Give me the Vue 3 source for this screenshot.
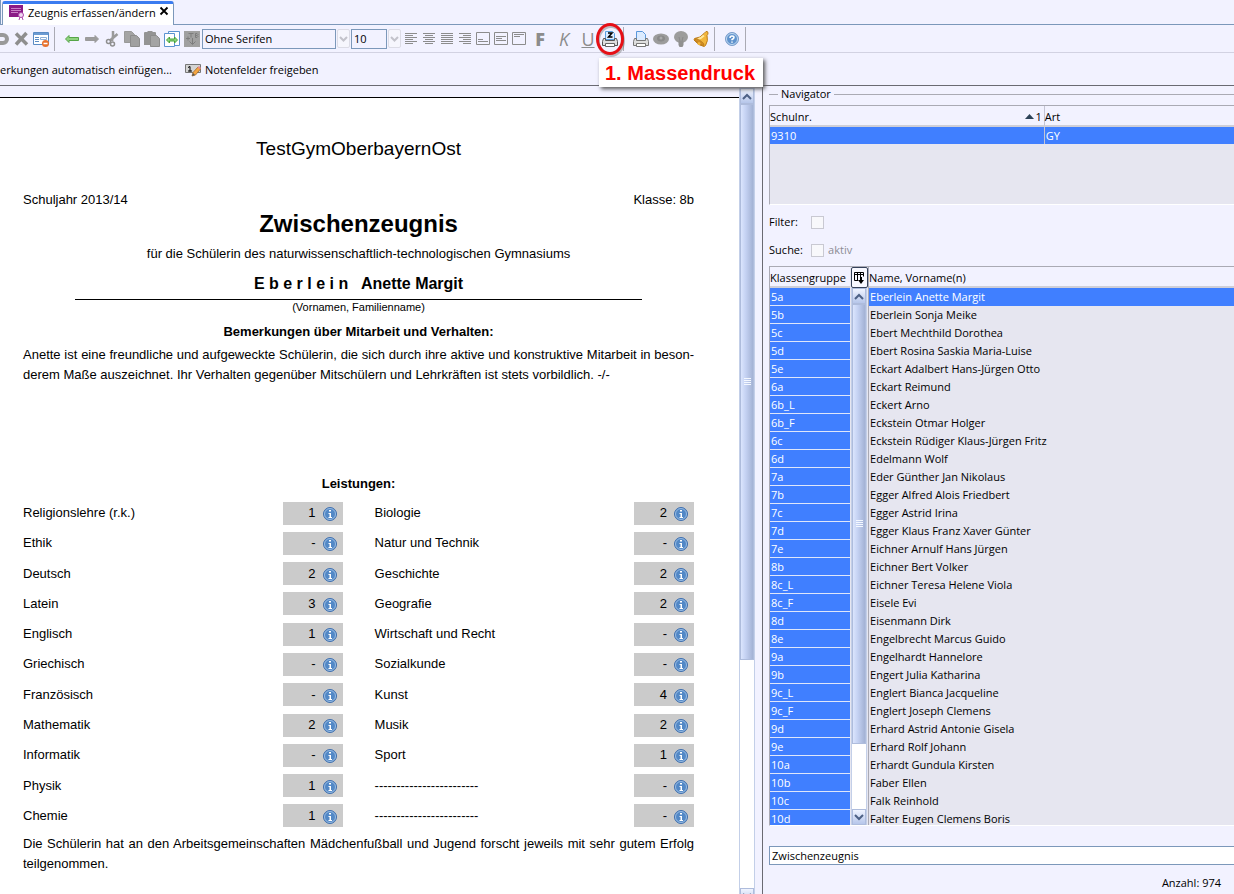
<script setup>
import { ref } from 'vue'

const school = 'TestGymOberbayernOst'
const font = ref('Ohne Serifen')
const size = ref('10')
const report = ref('Zwischenzeugnis')

const leftSubjects = ref([
  { name: 'Religionslehre (r.k.)', grade: '1' },
  { name: 'Ethik', grade: '-' },
  { name: 'Deutsch', grade: '2' },
  { name: 'Latein', grade: '3' },
  { name: 'Englisch', grade: '1' },
  { name: 'Griechisch', grade: '-' },
  { name: 'Französisch', grade: '-' },
  { name: 'Mathematik', grade: '2' },
  { name: 'Informatik', grade: '-' },
  { name: 'Physik', grade: '1' },
  { name: 'Chemie', grade: '1' },
])
const rightSubjects = ref([
  { name: 'Biologie', grade: '2' },
  { name: 'Natur und Technik', grade: '-' },
  { name: 'Geschichte', grade: '2' },
  { name: 'Geografie', grade: '2' },
  { name: 'Wirtschaft und Recht', grade: '-' },
  { name: 'Sozialkunde', grade: '-' },
  { name: 'Kunst', grade: '4' },
  { name: 'Musik', grade: '2' },
  { name: 'Sport', grade: '1' },
  { name: '------------------------', grade: '-' },
  { name: '------------------------', grade: '-' },
])

const groups = [
  '5a', '5b', '5c', '5d', '5e', '6a', '6b_L', '6b_F', '6c', '6d', '7a', '7b', '7c', '7d', '7e',
  '8b', '8c_L', '8c_F', '8d', '8e', '9a', '9b', '9c_L', '9c_F', '9d', '9e', '10a', '10b', '10c', '10d',
]
const pupils = [
  'Eberlein Anette Margit', 'Eberlein Sonja Meike', 'Ebert Mechthild Dorothea',
  'Ebert Rosina Saskia Maria-Luise', 'Eckart Adalbert Hans-Jürgen Otto', 'Eckart Reimund',
  'Eckert Arno', 'Eckstein Otmar Holger', 'Eckstein Rüdiger Klaus-Jürgen Fritz', 'Edelmann Wolf',
  'Eder Günther Jan Nikolaus', 'Egger Alfred Alois Friedbert', 'Egger Astrid Irina',
  'Egger Klaus Franz Xaver Günter', 'Eichner Arnulf Hans Jürgen', 'Eichner Bert Volker',
  'Eichner Teresa Helene Viola', 'Eisele Evi', 'Eisenmann Dirk', 'Engelbrecht Marcus Guido',
  'Engelhardt Hannelore', 'Engert Julia Katharina', 'Englert Bianca Jacqueline',
  'Englert Joseph Clemens', 'Erhard Astrid Antonie Gisela', 'Erhard Rolf Johann',
  'Erhardt Gundula Kirsten', 'Faber Ellen', 'Falk Reinhold', 'Falter Eugen Clemens Boris',
]
const selected = ref(0)

const aligns = [
  { label: 'Linksbündig', d: 'M3 3.5h12M3 5.5h8M3 7.5h12M3 9.5h8M3 11.5h12M3 13.5h8' },
  { label: 'Zentriert', d: 'M3 3.5h12M5 5.5h8M3 7.5h12M5 9.5h8M3 11.5h12M5 13.5h8' },
  { label: 'Blocksatz', d: 'M3 3.5h12M3 5.5h12M3 7.5h12M3 9.5h12M3 11.5h12M3 13.5h12' },
  { label: 'Rechtsbündig', d: 'M3 3.5h12M7 5.5h8M3 7.5h12M7 9.5h8M3 11.5h12M7 13.5h8' },
  { label: 'Unten', d: 'M2.5 2.5h13v12h-13zM4 9.5h5M4 11.5h10' },
  { label: 'Mitte', d: 'M2.5 2.5h13v12h-13zM4 6.5h10M4 8.5h6M4 10.5h10' },
  { label: 'Oben', d: 'M2.5 2.5h13v12h-13zM4 4.5h10M4 6.5h6' },
]
</script>

<template>
  <div class="app">
    <header class="tabs">
      <div class="tab-rest"></div>
      <div class="tab">
        <svg width="18" height="16" viewBox="0 0 18 16">
          <path d="M1 0h14v12H1z" fill="#8b1a86" />
          <path d="M3 3.500h10M3 5.500h10M3 7.500h7" stroke="#c97fc6" />
          <circle cx="13" cy="10" r="2.500" fill="#f0d8ef" stroke="#b04aac" />
          <path d="M12 12l-1 3M14 12l1 3" stroke="#b04aac" />
        </svg>
        <span>Zeugnis erfassen/ändern</span>
        <button class="close" aria-label="Schließen">
          <svg width="10" height="10" viewBox="0 0 10 10"><path d="M1.500 1.500l7 7M8.500 1.500l-7 7" stroke="#000" stroke-width="1.800" /></svg>
        </button>
      </div>
    </header>

    <div class="toolbar">
      <button class="tool" aria-label="Rückgängig">
        <svg width="20" height="18" viewBox="0 0 20 18"><path d="M6 5h6a4 4 0 0 1 0 8H6" fill="none" stroke="#999" stroke-width="4" /></svg>
      </button>
      <button class="tool" aria-label="Löschen">
        <svg width="20" height="18" viewBox="0 0 20 18"><path d="M5 3.500l11 11M15.500 3L5 14.500" stroke="#8e8e8e" stroke-width="3.500" /></svg>
      </button>
      <button class="tool" aria-label="Formular leeren">
        <svg width="20" height="18" viewBox="0 0 20 18">
          <path d="M2.500 2.500h15v12h-15z" fill="#fff" stroke="#5b8bc4" />
          <path d="M3 3h14v2H3z" fill="#6b9ad2" />
          <path d="M4 7.500h4M4 9.500h4M4 11.500h4" stroke="#5b8bc4" /><path d="M9.500 7.500h6v2h-6z" fill="none" stroke="#8fb0d8" />
          <circle cx="14.500" cy="13.500" r="3.500" fill="#e8702c" /><path d="M12.500 13.500h4" stroke="#fff" stroke-width="1.500" />
        </svg>
      </button>
      <span class="sep"></span>
      <button class="tool" aria-label="Zurück">
        <svg width="20" height="18" viewBox="0 0 20 18"><path d="M3.500 9l3.500-3.500v2h9.500v3H7v2z" fill="#8fd27f" stroke="#56a548" /></svg>
      </button>
      <button class="tool" aria-label="Vor">
        <svg width="20" height="18" viewBox="0 0 20 18"><path d="M16.500 9L13 5.500v2H3.500v3H13v2z" fill="#9c9c9c" stroke="#9a9a9a" /></svg>
      </button>
      <button class="tool" aria-label="Ausschneiden">
        <svg width="20" height="18" viewBox="0 0 20 18">
          <path d="M11 1v5l-1 5M15.500 4L8 10.500" fill="none" stroke="#9a9a9a" stroke-width="2.500" />
          <circle cx="6.500" cy="11.500" r="2" fill="none" stroke="#8f8f8f" stroke-width="1.500" /><circle cx="10.500" cy="14" r="2" fill="none" stroke="#8f8f8f" stroke-width="1.500" />
        </svg>
      </button>
      <button class="tool" aria-label="Kopieren">
        <svg width="20" height="18" viewBox="0 0 20 18"><path d="M2.500 1.500h7l3 3v8h-10z" fill="#a4a4a4" stroke="#999" /><path d="M8.500 5.500h6l3 3v8h-9z" fill="#a0a0a0" stroke="#8c8c8c" /></svg>
      </button>
      <button class="tool" aria-label="Einfügen">
        <svg width="20" height="18" viewBox="0 0 20 18"><path d="M2 3q0-1 1-1h2l1-1h4l1 1h2q1 0 1 1v12H2z" fill="#949494" /><path d="M8.500 5.500h6l3 3v8h-9z" fill="#a4a4a4" stroke="#8c8c8c" /></svg>
      </button>
      <button class="tool" aria-label="Textbaustein übernehmen">
        <svg width="20" height="18" viewBox="0 0 20 18">
          <path d="M6.500 1.500h11v14h-11z" fill="#fff" stroke="#5b93d0" /><path d="M2.500 3.500h10v13h-10z" fill="#fff" stroke="#5b93d0" />
          <path d="M4.500 10l3-3v2h5V7l3 3-3 3v-2h-5v2z" fill="#8fd27f" stroke="#46a53a" />
        </svg>
      </button>
      <button class="tool" aria-label="Textbaustein TB">
        <svg width="20" height="18" viewBox="0 0 20 18">
          <path d="M2 1h16v16H2z" fill="#a0a0a0" />
          <path d="M6.500 3.500h5M9 3.500v4M13.500 7.500v-4h1.500l1 1-1 1h-1.500M15 5.500l1 1-1 1h-1.500M4 8.500h4M6 6.500v4M10.500 8v6M7.500 11.500l3 3 3-3" fill="none" stroke="#7c7c7c" />
        </svg>
      </button>
      <select v-model="font" class="combo font" aria-label="Schriftart"><option>Ohne Serifen</option></select>
      <span class="drop"><svg width="9" height="6" viewBox="0 0 9 6"><path d="M1 1l3.500 3.500L8 1" fill="none" stroke="#c3c3cb" stroke-width="2" /></svg></span>
      <select v-model="size" class="combo size" aria-label="Schriftgröße"><option>10</option></select>
      <span class="drop"><svg width="9" height="6" viewBox="0 0 9 6"><path d="M1 1l3.500 3.500L8 1" fill="none" stroke="#c3c3cb" stroke-width="2" /></svg></span>
      <button v-for="a in aligns" :key="a.label" class="tool align" :aria-label="a.label">
        <svg width="18" height="18" viewBox="0 0 18 18"><path :d="a.d" fill="none" stroke="#8c8c8c" /></svg>
      </button>
      <button class="tool letter bold">F</button>
      <button class="tool letter italic">K</button>
      <button class="tool letter under">U</button>
      <button class="tool mass" aria-label="Massendruck">
        <svg width="20" height="20" viewBox="0 0 20 20">
          <path d="M5.500 2.500h7l2 2v6h-9z" fill="#dcecff" stroke="#5aa0e0" />
          <path d="M8 4h4L8.500 8h4" fill="none" stroke="#000" stroke-width="1.500" />
          <path d="M3.500 9.500h2v2h9v-2h2l1 3v4h-15v-4z" fill="#dedede" stroke="#555" />
          <path d="M5.500 14.500h9v3h-9z" fill="#fff" stroke="#666" />
        </svg>
        <svg class="ring" width="34" height="38" viewBox="0 0 34 38"><ellipse cx="18" cy="20" rx="12.500" ry="14.500" fill="none" stroke="#777" stroke-opacity=".45" stroke-width="3" /><ellipse cx="17" cy="18" rx="12.500" ry="14.500" fill="none" stroke="#e60f16" stroke-width="3" /></svg>
      </button>
      <span class="sep"></span>
      <button class="tool" aria-label="Drucken">
        <svg width="20" height="18" viewBox="0 0 20 18">
          <path d="M5.500 1.500h6l3 3v6h-9z" fill="#dcebff" stroke="#5a98dc" />
          <path d="M3.500 8.500h2v2h9v-2h2l1 3v4h-15v-4z" fill="#dedede" stroke="#777" />
          <path d="M5.500 13.500h9v3h-9z" fill="#fff" stroke="#777" />
        </svg>
      </button>
      <button class="tool" aria-label="Vorschau">
        <svg width="20" height="18" viewBox="0 0 20 18"><ellipse cx="10" cy="9" rx="8" ry="5.500" fill="#9c9c9c" /><ellipse cx="10" cy="8.500" rx="4" ry="3" fill="#8a8a8a" /><circle cx="10" cy="8" r="1.500" fill="#aaa" /></svg>
      </button>
      <button class="tool" aria-label="Hinweis">
        <svg width="20" height="18" viewBox="0 0 20 18"><ellipse cx="10" cy="7" rx="7" ry="6" fill="#9c9c9c" /><path d="M7.500 11h5v4l-1 2h-3l-1-2z" fill="#909090" /><path d="M8 7l1 4M12 7l-1 4" stroke="#8a8a8a" /></svg>
      </button>
      <button class="tool" aria-label="Erinnerung">
        <svg width="20" height="18" viewBox="0 0 20 18">
          <path d="M15 1.500q2-.500 2 1.500 0 1.500-1 2.500 1.500 5-1.500 10l-1.500 1q-6-1-10-6.500l.500-1.500q6-.500 9.500-5z" fill="#f2b63c" stroke="#bd7d1c" />
          <path d="M13 5.500q-3 3-7 4" fill="none" stroke="#ffe79a" stroke-width="1.800" />
          <ellipse cx="8.500" cy="12" rx="5.500" ry="1.600" transform="rotate(35 8.500 12)" fill="#d08d22" stroke="#b4741a" stroke-width=".600" /><circle cx="8" cy="13.500" r="1.500" fill="#f2b63c" />
        </svg>
      </button>
      <span class="sep"></span>
      <button class="tool" aria-label="Hilfe">
        <svg width="20" height="18" viewBox="0 0 20 18"><circle cx="10" cy="9" r="6.500" fill="#5f93cd" stroke="#7d9fcc" /><circle cx="10" cy="9" r="5.500" fill="none" stroke="#c4dbf2" /><path d="M8 8q0-2 2-2t2 1.500q0 1-2 2v.800M10 11.500v1.200" fill="none" stroke="#fff" stroke-width="1.500" /></svg>
      </button>
      <span class="sep"></span>
      <div class="callout">1. Massendruck</div>
    </div>

    <div class="actions">
      <button>erkungen automatisch einfügen...</button>
      <button class="with-icon">
        <svg width="16" height="14" viewBox="0 0 16 14">
          <path d="M.500 1.500h15v8H.500z" fill="#d4d4d4" stroke="#777" /><path d="M3 4.500l2-1v5M3 8h4" fill="none" stroke="#000" />
          <path d="M7 13l1-3.500 5-5.500 2.500 2-5 6z" fill="#f6a540" stroke="#a06a2a" stroke-width=".800" /><path d="M7 13l1-3 2 2z" fill="#555" /><path d="M12.500 4.500l1.500-1.500 2 2-1 1.500z" fill="#e88a8a" />
        </svg>
        Notenfelder freigeben
      </button>
    </div>

    <main class="main">
      <section class="doc-pane">
        <article class="doc">
          <p class="school">{{ school }}</p>
          <div class="line"><span>Schuljahr 2013/14</span><span>Klasse: 8b</span></div>
          <h1>Zwischenzeugnis</h1>
          <p class="kind">für die Schülerin des naturwissenschaftlich-technologischen Gymnasiums</p>
          <p class="pupil">E b e r l e i n &nbsp; Anette Margit</p>
          <p class="caption">(Vornamen, Familienname)</p>
          <h2>Bemerkungen über Mitarbeit und Verhalten:</h2>
          <p class="remark"><span class="full">Anette ist eine freundliche und aufgeweckte Schülerin, die sich durch ihre aktive und konstruktive Mitarbeit in beson-</span>derem Maße auszeichnet. Ihr Verhalten gegenüber Mitschülern und Lehrkräften ist stets vorbildlich. -/-</p>
          <h2 class="marks-title">Leistungen:</h2>
          <div class="marks">
            <div v-for="(list, c) in [leftSubjects, rightSubjects]" :key="c" class="marks-col">
              <div v-for="(s, i) in list" :key="i" class="mark">
                <label :for="`m${c}-${i}`">{{ s.name }}</label>
                <span class="field">
                  <input :id="`m${c}-${i}`" v-model="s.grade" />
                  <button class="info" aria-label="Info">
                    <svg width="14" height="14" viewBox="0 0 14 14">
                      <circle cx="7" cy="7" r="6.500" fill="#5288c6" stroke="#3f6fae" /><circle cx="7" cy="7" r="5.500" fill="none" stroke="#a9c8e8" stroke-width=".800" />
                      <path d="M6 3h2v1.500H6zM5.500 6H8v4h1v1H5.500v-1h1V7h-1z" fill="#fff" />
                    </svg>
                  </button>
                </span>
              </div>
            </div>
          </div>
          <p class="remark"><span class="full">Die Schülerin hat an den Arbeitsgemeinschaften Mädchenfußball und Jugend forscht jeweils mit sehr gutem Erfolg</span>teilgenommen.</p>
        </article>
        <div class="scroll page-scroll">
          <span class="arrow"><svg width="10" height="7" viewBox="0 0 10 7"><path d="M1 6l4-4 4 4" fill="none" stroke="#4d6185" stroke-width="2" /></svg></span>
          <span class="thumb"></span>
          <span class="arrow end"><svg width="10" height="7" viewBox="0 0 10 7"><path d="M1 1l4 4 4-4" fill="none" stroke="#4d6185" stroke-width="2" /></svg></span>
        </div>
      </section>

      <aside class="nav">
        <div class="legend">Navigator</div>
        <div class="box schools">
          <table>
            <thead><tr><th class="nr"><div class="sorted"><span>Schulnr.</span><span class="sort"><svg width="9" height="5" viewBox="0 0 9 5"><path d="M0 5l4.500-5L9 5z" fill="#2c4257" /></svg>1</span></div></th><th>Art</th></tr></thead>
            <tbody><tr class="sel"><td>9310</td><td>GY</td></tr></tbody>
          </table>
        </div>
        <div class="check"><label for="filter">Filter:</label><input id="filter" type="checkbox" /></div>
        <div class="check"><label for="suche">Suche:</label><input id="suche" type="checkbox" /><span class="dim">aktiv</span></div>

        <div class="box lists">
          <div class="group-list">
            <table>
              <thead><tr><th>Klassengruppe</th></tr></thead>
              <tbody><tr v-for="g in groups" :key="g" class="sel"><td>{{ g }}</td></tr></tbody>
            </table>
          </div>
          <div class="group-side">
            <button class="config" aria-label="Spalten">
              <svg width="12" height="14" viewBox="0 0 12 14"><path d="M5 9.500H1.500v-8h9v4M1.500 3.500h9M4.500 2v7M7.500 2v4" fill="none" stroke="#000" /><path d="M7 6h2v3h2l-3 4-3-4h2z" fill="#000" /></svg>
            </button>
            <div class="scroll">
              <span class="arrow"><svg width="10" height="7" viewBox="0 0 10 7"><path d="M1 6l4-4 4 4" fill="none" stroke="#4d6185" stroke-width="2" /></svg></span>
              <span class="thumb"></span>
              <span class="arrow end"><svg width="10" height="7" viewBox="0 0 10 7"><path d="M1 1l4 4 4-4" fill="none" stroke="#4d6185" stroke-width="2" /></svg></span>
            </div>
          </div>
          <div class="pupil-list">
            <table>
              <thead><tr><th>Name, Vorname(n)</th></tr></thead>
              <tbody><tr v-for="(p, i) in pupils" :key="p" :class="{ sel: i === selected }" @click="selected = i"><td>{{ p }}</td></tr></tbody>
            </table>
          </div>
        </div>

        <input v-model="report" class="report" aria-label="Zeugnisart" />
        <div class="count">Anzahl: 974</div>
      </aside>
    </main>
  </div>
</template>

<style>
body { overflow: hidden; background: #f2f2ff; }
</style>

<style scoped>
* { box-sizing: border-box; }
.app { height: 100vh; display: flex; flex-direction: column; overflow: hidden; background: #f2f2ff; color: #000; font: 11px/16px "Open Sans", "Noto Sans", sans-serif; }
button { margin: 0; padding: 0; border: 0; background: none; font: inherit; color: inherit; }
input, select { margin: 0; font: inherit; color: inherit; border-radius: 0; }
p, h1, h2 { margin: 0; }
svg { display: block; flex: none; }

.tabs { flex: none; display: flex; height: 25px; border-bottom: 1px solid #7c98ba; }
.tab-rest { width: 1px; margin-right: 1px; border-right: 1px solid #7c98ba; }
.tab { display: flex; align-items: center; height: 24px; margin-top: 1px; padding: 0 4px 4px 5px; background: #fff; border: 1px solid #7c98ba; border-top: 3px solid #3a7bf0; border-bottom: 0; border-radius: 3px 3px 0 0; }
.tab span { margin: 0 3px 0 2px; white-space: nowrap; }
.close { margin-bottom: 3px; }

.toolbar { position: relative; flex: none; display: flex; align-items: center; height: 28px; padding-right: 8px; margin-left: -9px; border-bottom: 1px solid #d2d2e2; white-space: nowrap; }
.tool { position: relative; flex: none; display: flex; align-items: center; justify-content: center; width: 20px; height: 24px; }
.align { width: 18px; }
.letter { width: 24px; font: 18px/22px "Open Sans", sans-serif; color: #8c8c8c; }
.bold { font-weight: 800; }
.italic { font-style: italic; }
.under { text-decoration: underline; }
.sep { flex: none; width: 11px; height: 24px; padding-left: 3px; }
.sep::before { content: ""; display: block; width: 1px; height: 24px; background: #aaaab4; }
.combo { flex: none; height: 20px; padding: 0 2px; background: #f2f2ff; border: 1px solid #7c98ba; appearance: none; }
.font { width: 134px; }
.size { width: 36px; }
.drop { flex: none; display: flex; align-items: center; justify-content: center; width: 13px; height: 19px; margin: 0 1px; background: #f6f6fd; border: 1px solid #dcdce6; border-radius: 2px; }
.mass { z-index: 2; }
.ring { position: absolute; left: -7px; top: -6px; }
.callout { position: absolute; left: 608px; top: 33px; z-index: 1; padding: 1px 8px 0 6px; background: #fff; box-shadow: 2px 2px 4px #555; color: #f00; font: bold 20px/28px "Liberation Sans", Arial, sans-serif; }

.actions { flex: none; display: flex; align-items: center; gap: 13px; height: 32px; padding-top: 2px; white-space: nowrap; }
.with-icon { display: flex; align-items: center; gap: 4px; }

.main { flex: 1; min-height: 0; display: flex; border-top: 1px solid #6a6a72; }
.doc-pane { flex: 0 0 calc(62% - 2px); min-width: 0; display: flex; padding-right: 7px; border-right: 1px solid #6a6a72; margin-right: 6px; }
.doc { flex: 1; min-width: 0; margin-top: 11px; padding: 40px 45px 0 23px; overflow: hidden; background: #fff; border-top: 1px solid #000; font: 13px/20px "Liberation Sans", Arial, sans-serif; text-align: center; }
.school { font-size: 19px; line-height: 22px; }
.line { display: flex; justify-content: space-between; margin-top: 30px; }
h1 { font-size: 24px; line-height: 28px; }
.kind { margin-top: 6px; }
.pupil { margin: 8px 52px 0; padding-bottom: 3px; border-bottom: 1px solid #000; font-weight: bold; font-size: 16px; line-height: 24px; }
.caption { font-size: 11px; line-height: 14px; }
h2 { margin-top: 8px; font-size: 13px; line-height: 20px; }
.remark { margin-top: 3px; text-align: left; white-space: nowrap; }
.full { display: block; white-space: normal; text-align-last: justify; }
.marks-title { margin-top: 89px; }
.marks { display: flex; gap: 32px; margin-top: 4px; text-align: left; }
.marks-col { flex: 1; height: 333px; display: grid; grid-template-rows: repeat(11, 1fr); }
.mark { display: flex; align-items: center; justify-content: space-between; }
.field { display: flex; align-items: center; gap: 7px; width: 60px; height: 23px; padding-right: 6px; background: #cbcbcb; }
.field input { flex: 1; min-width: 0; padding: 0; border: 0; background: none; text-align: right; }
.info { padding-top: 2px; }

.scroll { flex: none; display: flex; flex-direction: column; width: 16px; background: #fff; border: solid #c3cfe8; border-width: 0 1px; }
.arrow { flex: none; display: flex; align-items: center; justify-content: center; height: 16px; background: linear-gradient(#f0f4ff, #b6c6ea); border: 1px solid #aebcdc; }
.thumb { flex: 0 0 79%; display: flex; align-items: center; justify-content: center; background: linear-gradient(90deg, #dbe5fd, #c4d1f2 40%, #a3b2d4); border: 1px solid #aebcdc; }
.thumb::before { content: ""; width: 7px; height: 8px; background: repeating-linear-gradient(#f4f8ff 0 1px, transparent 1px 2px); }
.end { margin-top: auto; }
.page-scroll { margin-top: 2px; }
.page-scroll .thumb { flex-basis: 69%; }
.page-scroll .end { margin-bottom: -10px; }

.nav { flex: 1; min-width: 0; display: flex; flex-direction: column; padding-bottom: 2px; }
.legend { display: flex; align-items: center; gap: 3px; height: 16px; }
.legend::before { content: ""; width: 9px; height: 1px; background: #aaaab4; }
.legend::after { content: ""; flex: 1; height: 1px; background: #aaaab4; }
.box { border-left: 1px solid #aaaab4; border-top: 1px solid #aaaab4; border-bottom: 1px solid #fff; background: #e6e6f0; overflow: hidden; }
table { width: 100%; border-spacing: 0; table-layout: fixed; }
th { height: 21px; padding: 2px 0 0; background: #f2f2ff; border-bottom: 2px solid #cfcfd8; text-align: left; font-weight: normal; line-height: 16px; white-space: nowrap; }
td { height: 18px; padding: 2px 0 0 1px; vertical-align: top; line-height: 13px; white-space: nowrap; }
.sel { background: #407fff; color: #fff; }
.schools { flex: none; height: 100px; margin-top: 3px; }
.schools td { height: 17px; }
.schools th + th, .schools td + td { border-left: 1px solid #c4c4d4; }
.nr { width: 59%; }
.sorted { display: flex; justify-content: space-between; }
.sort { display: flex; align-items: center; gap: 1px; padding-right: 2px; }
.check { flex: none; display: flex; align-items: center; height: 16px; margin-top: 9px; }
.check + .check { margin-top: 12px; }
.check label { width: 42px; }
.check input { width: 13px; height: 13px; appearance: none; background: #f8f8fb; border: 1px solid #c9c9d2; }
.dim { margin-left: 4px; color: #8c8c94; }
.lists { flex: 1; min-height: 0; display: flex; margin-top: 8px; }
.group-list { flex: none; width: 80px; overflow: hidden; }
.group-list td { border-bottom: 1px solid #dfe6fa; }
.group-side { flex: none; display: flex; flex-direction: column; align-items: center; width: 18px; }
.config { flex: none; display: flex; align-items: center; justify-content: center; width: 17px; height: 21px; border: 1px solid #35415a; border-radius: 2px; background: #f8f8ff; }
.group-side .scroll { flex: 1; min-height: 0; }
.group-side .thumb { flex-basis: 82%; }
.pupil-list { flex: 1; min-width: 0; overflow: hidden; border-left: 1px solid #aaaab4; }
.report { flex: none; height: 19px; margin-top: 20px; padding: 0 2px; background: #fff; border: 1px solid #7c98ba; border-right: 0; }
.count { flex: none; margin: 10px 13px 1px 0; text-align: right; }
</style>
